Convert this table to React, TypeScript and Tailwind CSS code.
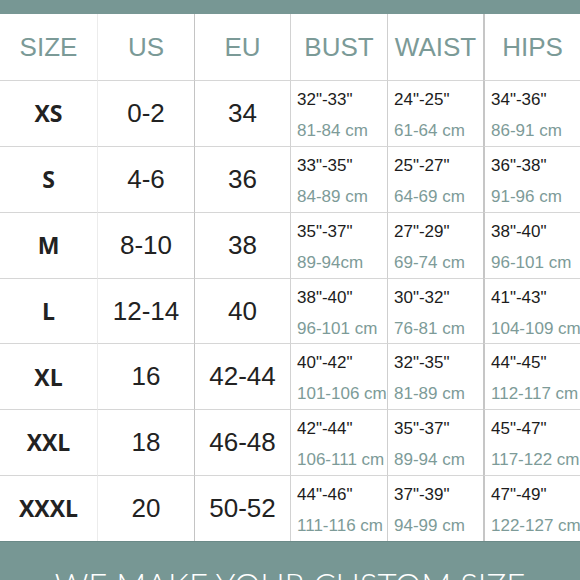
import React from "react";

const rows = [
  { size: "XS", us: "0-2", eu: "34", bust: ['32"-33"', "81-84 cm"], waist: ['24"-25"', "61-64 cm"], hips: ['34"-36"', "86-91 cm"] },
  { size: "S", us: "4-6", eu: "36", bust: ['33"-35"', "84-89 cm"], waist: ['25"-27"', "64-69 cm"], hips: ['36"-38"', "91-96 cm"] },
  { size: "M", us: "8-10", eu: "38", bust: ['35"-37"', "89-94cm"], waist: ['27"-29"', "69-74 cm"], hips: ['38"-40"', "96-101 cm"] },
  { size: "L", us: "12-14", eu: "40", bust: ['38"-40"', "96-101 cm"], waist: ['30"-32"', "76-81 cm"], hips: ['41"-43"', "104-109 cm"] },
  { size: "XL", us: "16", eu: "42-44", bust: ['40"-42"', "101-106 cm"], waist: ['32"-35"', "81-89 cm"], hips: ['44"-45"', "112-117 cm"] },
  { size: "XXL", us: "18", eu: "46-48", bust: ['42"-44"', "106-111 cm"], waist: ['35"-37"', "89-94 cm"], hips: ['45"-47"', "117-122 cm"] },
  { size: "XXXL", us: "20", eu: "50-52", bust: ['44"-46"', "111-116 cm"], waist: ['37"-39"', "94-99 cm"], hips: ['47"-49"', "122-127 cm"] },
];

const sans = "font-['Liberation_Sans',Arial,sans-serif]";

function Measure({ v, border }: { v: string[]; border: string }) {
  return (
    <div className={`border-t border-t-[#d6d6d6] ${border} pl-[6px] pt-[3px] overflow-visible whitespace-nowrap ${sans} text-[17px] leading-[31px]`}>
      <div className="text-[#1c1c1c]">{v[0]}</div>
      <div className="text-[#7d9b98]">{v[1]}</div>
    </div>
  );
}

export default function App() {
  const b1 = "";
  const b2 = "border-l border-l-[#ececec]";
  const b3 = "border-l border-l-[#c4c4c4]";
  const b4 = "border-l border-l-[#d2d2d2]";
  const b5 = "border-l border-l-[#cfcfcf]";
  const b6 = "border-l-2 border-l-[#c6c6c6]";
  const head = `flex items-center justify-center ${sans} text-[26px] text-[#7b9a97]`;
  const num = `border-t border-t-[#d6d6d6] flex items-center justify-center ${sans} text-[26px] text-[#222]`;
  return (
    <div className="w-[580px] h-[580px] overflow-hidden bg-white flex flex-col">
      <div className="h-[14px] shrink-0 bg-[#779794]" />
      <div className="grid grid-cols-[97px_97px_96px_97px_96px_97px] grid-rows-[66px_repeat(7,65.86px)] shrink-0">
        <div className={`${head} ${b1}`}>SIZE</div>
        <div className={`${head} ${b2}`}>US</div>
        <div className={`${head} ${b3}`}>EU</div>
        <div className={`${head} ${b4}`}>BUST</div>
        <div className={`${head} ${b5}`}>WAIST</div>
        <div className={`${head} ${b6}`}>HIPS</div>
        {rows.map((r) => (
          <React.Fragment key={r.size}>
            <div className={`border-t border-t-[#d6d6d6] flex items-center justify-center font-['Open_Sans',sans-serif] font-bold text-[23px] text-[#222]`}>{r.size}</div>
            <div className={`${num} ${b2}`}>{r.us}</div>
            <div className={`${num} ${b3}`}>{r.eu}</div>
            <Measure v={r.bust} border={b4} />
            <Measure v={r.waist} border={b5} />
            <Measure v={r.hips} border={b6} />
          </React.Fragment>
        ))}
      </div>
      <div className="flex-1 bg-[#779794] border-t border-t-[#6b8a88] flex justify-center pt-[27px] overflow-hidden">
        <div className="font-['Lato',sans-serif] font-light text-[33px] leading-none text-white whitespace-nowrap">
          WE MAKE YOUR CUSTOM SIZE
        </div>
      </div>
    </div>
  );
}
